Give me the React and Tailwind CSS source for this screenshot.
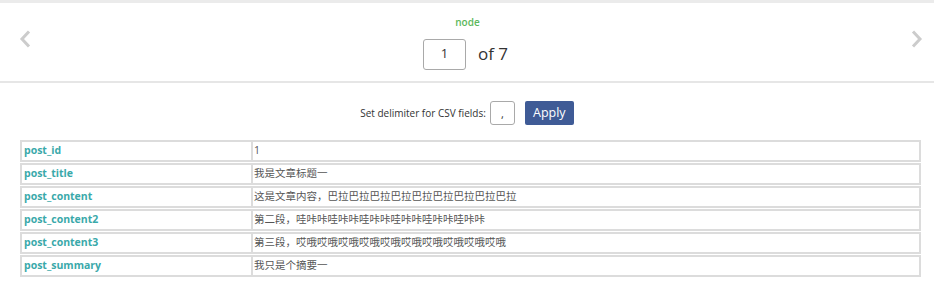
import React from 'react';

const rows = [
  ['post_id', '1'],
  ['post_title', '我是文章标题一'],
  ['post_content', '这是文章内容，巴拉巴拉巴拉巴拉巴拉巴拉巴拉巴拉巴拉'],
  ['post_content2', '第二段，哇咔咔哇咔咔哇咔咔哇咔咔哇咔咔哇咔咔'],
  ['post_content3', '第三段，哎哦哎哦哎哦哎哦哎哦哎哦哎哦哎哦哎哦哎哦'],
  ['post_summary', '我只是个摘要一'],
];

export default function App() {
  return (
    <div
      className="w-[934px] h-[305px] bg-white overflow-hidden"
      style={{ fontFamily: '"Open Sans", "Noto Sans CJK SC", sans-serif' }}
    >
      {/* Pager header */}
      <div className="border-t-[3px] border-[#ebebeb] border-b-2 border-b-[#e6e6e6] h-[83px] flex items-center justify-between pl-[19px] pr-[11px]">
        <svg width="12" height="18" viewBox="0 0 12 18" className="mb-[6px]">
          <path d="M10 1.5 L3 9 L10 16.5" fill="none" stroke="#cccccc" strokeWidth="3" />
        </svg>
        <div className="flex flex-col items-center pt-[2px] mr-[11px]">
          <div className="text-[10px] font-semibold text-[#5cb85c] leading-none mb-[12px] ml-[4px]">node</div>
          <div className="flex items-center gap-[12px]">
            <div className="w-[43px] h-[31px] border border-[#a9a9a9] rounded-[3px] flex items-center justify-center text-[13px] text-[#333]">
              1
            </div>
            <span className="text-[17px] text-[#333]">of 7</span>
          </div>
        </div>
        <svg width="12" height="18" viewBox="0 0 12 18" className="mb-[6px]">
          <path d="M2 1.5 L9 9 L2 16.5" fill="none" stroke="#cccccc" strokeWidth="3" />
        </svg>
      </div>

      {/* Delimiter */}
      <div className="flex items-center justify-center mt-[18px]">
        <span className="text-[10px] text-[#333] mr-[4px]">Set delimiter for CSV fields:</span>
        <div className="w-[25px] h-[24px] border border-[#a9a9a9] rounded-[3px] flex items-center justify-center text-[11px] text-[#333] leading-none">
          ,
        </div>
        <button className="ml-[10px] w-[49px] h-[24px] bg-[#3f5b96] text-white text-[12.5px] rounded-[2px]">
          Apply
        </button>
      </div>

      {/* Record table */}
      <div className="px-[20px] mt-[14px]">
        <table className="w-[901px] border-separate border-spacing-x-0 border-spacing-y-[1.5px] text-[10.5px]">
          <tbody>
            {rows.map(([key, value]) => (
              <tr key={key}>
                <td className="w-[231px] h-[22px] border-2 border-r-0 border-[#dcdcdc] pl-[2px] font-bold text-[#3aa9aa]">
                  {key}
                </td>
                <td className="h-[22px] border-2 border-[#dcdcdc] pl-[1px] text-[#555]">{value}</td>
              </tr>
            ))}
          </tbody>
        </table>
      </div>
    </div>
  );
}
